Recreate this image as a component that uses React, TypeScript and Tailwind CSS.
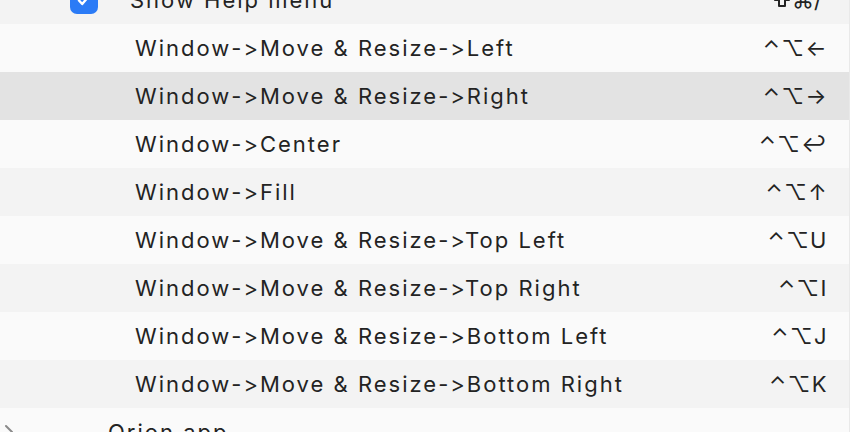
import React from 'react';

const rows = [
  { label: 'Window->Move & Resize->Left', keys: '⌃⌥←' },
  { label: 'Window->Move & Resize->Right', keys: '⌃⌥→' },
  { label: 'Window->Center', keys: '⌃⌥↩' },
  { label: 'Window->Fill', keys: '⌃⌥↑' },
  { label: 'Window->Move & Resize->Top Left', keys: '⌃⌥U' },
  { label: 'Window->Move & Resize->Top Right', keys: '⌃⌥I' },
  { label: 'Window->Move & Resize->Bottom Left', keys: '⌃⌥J' },
  { label: 'Window->Move & Resize->Bottom Right', keys: '⌃⌥K' },
];

const font = { fontFamily: 'Inter, "DejaVu Sans", sans-serif', fontFeatureSettings: '"calt" 0, "liga" 0' };

export default function App() {
  return (
    <div className="w-[868px] h-[432px] overflow-hidden bg-white text-[#232323]" style={font}>
      <div className="w-[850px] border-r border-[#e9e9e9] -mt-6">
        {/* Show Help menu */}
        <div className="h-12 flex items-center bg-[#f3f3f3] pr-[27px]">
          <div className="ml-[70px] w-[28px] h-[28px] rounded-[7px] bg-[#2b7bf6] flex items-center justify-center">
            <svg width="16" height="16" viewBox="0 0 16 16" fill="none">
              <path d="M3 8.5l3.2 3.5L13 4" stroke="white" strokeWidth="2.4" strokeLinecap="round" strokeLinejoin="round" />
            </svg>
          </div>
          <span className="ml-[32px] text-[22px] tracking-[2px]">Show Help menu</span>
          <span className="ml-auto flex items-center text-[22px]">
            <svg width="18" height="18" viewBox="0 0 18 18" fill="none" className="mr-[1px]">
              <path d="M9 2L2 9h4v6h6V9h4z" stroke="#232323" strokeWidth="2" strokeLinejoin="round" />
            </svg>
            <span>⌘/</span>
          </span>
        </div>

        {rows.map((r, i) => (
          <div
            key={i}
            className={
              'h-12 flex items-center pl-[135px] pr-[21px] ' +
              (i === 1 ? 'bg-[#e3e3e3]' : i % 2 === 0 ? 'bg-[#fafafa]' : 'bg-[#f3f3f3]')
            }
          >
            <span className="text-[22px] tracking-[2px]">{r.label}</span>
            <span className="ml-auto text-[22px] tracking-[1.5px]">{r.keys}</span>
          </div>
        ))}

        {/* Orion app */}
        <div className="h-12 flex items-center bg-[#fafafa]">
          <svg className="ml-[3px]" width="12" height="16" viewBox="0 0 12 16" fill="none">
            <path d="M3 2l6 6-6 6" stroke="#8a8a8a" strokeWidth="2" strokeLinecap="round" strokeLinejoin="round" />
          </svg>
          <span className="ml-[93px] text-[22px] tracking-[2px]">Orion app</span>
        </div>
      </div>
    </div>
  );
}
